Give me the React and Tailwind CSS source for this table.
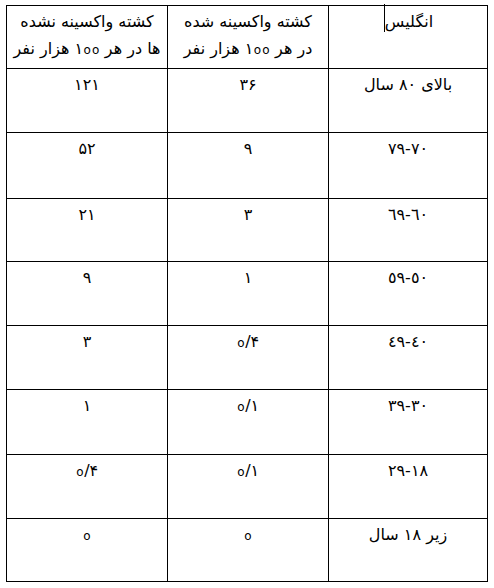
import React from "react";

const Z = () => (
  <span className="text-[12px] font-normal leading-none px-[0.5px]" style={{ fontFamily: '"DejaVu Sans", sans-serif' }}>
    o
  </span>
);

const Num = ({ children }) => <bdi dir="ltr">{children}</bdi>;

const rows = [
  ["بالای ۸۰ سال", <>۳۶</>, <>۱۲۱</>, "h-[64px]"],
  ["٧٠-٧٩", <>۹</>, <>۵۲</>, "h-[66px]"],
  ["٦٠-٦٩", <>۳</>, <>۲۱</>, "h-[63px]"],
  ["٥٠-٥٩", <>۱</>, <>۹</>, "h-[64px]"],
  ["٤٠-٤٩", <><Z />/۴</>, <>۳</>, "h-[64px]"],
  ["٣٠-٣٩", <><Z />/۱</>, <>۱</>, "h-[65px]"],
  ["١٨-٢٩", <><Z />/۱</>, <><Z />/۴</>, "h-[64px]"],
  ["زیر ۱۸ سال", <Z />, <Z />, "h-[63px]"],
];

export default function App() {
  return (
    <div
      className="w-[494px] h-[588px] bg-white pl-[6px] pt-[5px] text-black"
      style={{ fontFamily: '"DejaVu Sans", "Noto Sans", sans-serif' }}
    >
      <table dir="rtl" className="border-collapse table-fixed w-[482px] text-[16px] leading-[27px]">
        <colgroup>
          <col className="w-[159px]" />
          <col className="w-[161px]" />
          <col className="w-[161px]" />
        </colgroup>
        <tbody>
          <tr className="h-[63px]">
            <td className="border border-black align-top text-center pt-[2px]">
              <span>انگلیس</span>
              <span className="relative inline-block w-px h-[28px] bg-black align-top top-[-4px] ml-[1px]"></span>
            </td>
            <td className="border border-black align-top text-center pt-[2px]">
              کشته واکسینه شده
              <br />
              در هر <Num>۱<Z /><Z /></Num> هزار نفر
            </td>
            <td className="border border-black align-top text-center pt-[2px]">
              کشته واکسینه نشده
              <br />
              ها در هر <Num>۱<Z /><Z /></Num> هزار نفر
            </td>
          </tr>
          {rows.map((r, i) => (
            <tr key={i} className={r[3]}>
              <td className="border border-black align-top text-center pt-[2px]">{r[0]}</td>
              <td className="border border-black align-top text-center pt-[2px]">
                <Num>{r[1]}</Num>
              </td>
              <td className="border border-black align-top text-center pt-[2px]">
                <Num>{r[2]}</Num>
              </td>
            </tr>
          ))}
        </tbody>
      </table>
    </div>
  );
}
